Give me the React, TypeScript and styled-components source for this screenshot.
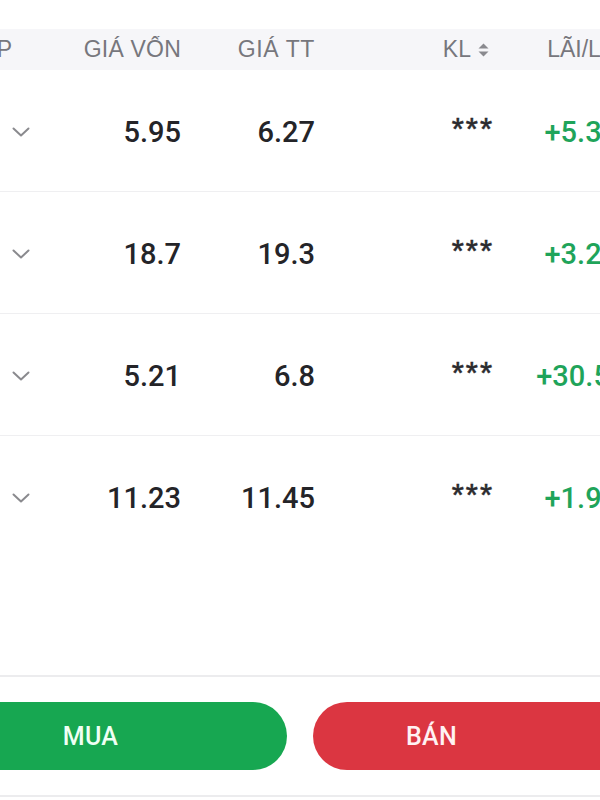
import React from "react";
import styled, { createGlobalStyle } from "styled-components";

const Global = createGlobalStyle`
  html, body { margin: 0; padding: 0; background: #ffffff; }
  body {
    width: 600px;
    height: 800px;
    overflow: hidden;
    font-family: "Liberation Sans", Arial, sans-serif;
  }
`;

const Screen = styled.div`
  width: 600px;
  height: 800px;
  overflow: hidden;
  display: flex;
  flex-direction: column;
  padding: 29px 0 3px;
  box-sizing: border-box;
  background: #ffffff;
`;

const COLS = "140px 141px 134px 176px 202px";

const Table = styled.div`
  margin-left: -100px;
  width: 793px;
  display: flex;
  flex-direction: column;
  flex: none;
`;

const HeaderRow = styled.div`
  display: grid;
  grid-template-columns: ${COLS};
  height: 41px;
  align-items: center;
  background: #f6f6f9;
`;

type Align = "right" | "center";

const HeaderCell = styled.div<{ $align: Align; $pr?: number; $ls?: number }>`
  display: flex;
  align-items: center;
  justify-content: ${(p) => (p.$align === "right" ? "flex-end" : "center")};
  gap: 7px;
  padding-right: ${(p) => p.$pr ?? 0}px;
  font-family: "Liberation Sans", Arial, sans-serif;
  font-size: 23px;
  letter-spacing: ${(p) => p.$ls ?? 0}px;
  color: #77777d;
  white-space: nowrap;
  overflow: hidden;
`;

const Row = styled.div`
  display: grid;
  grid-template-columns: ${COLS};
  height: 122px;
  padding-top: 2px;
  align-items: center;
  box-sizing: border-box;
  &:not(:last-child) {
    border-bottom: 1px solid #efeff1;
  }
`;

const ChevronCell = styled.div`
  display: flex;
  justify-content: flex-end;
  align-items: center;
  padding-right: 10px;
`;

const Cell = styled.div<{ $align: Align; $tone?: "dark" | "up" }>`
  display: flex;
  align-items: center;
  justify-content: ${(p) => (p.$align === "right" ? "flex-end" : "center")};
  font-family: Roboto, "Liberation Sans", Arial, sans-serif;
  font-weight: 500;
  font-size: 29px;
  color: ${(p) => (p.$tone === "up" ? "#1fa45a" : "#242428")};
  white-space: nowrap;
`;

const Masked = styled.span`
  font-family: "Liberation Sans", Arial, sans-serif;
  font-weight: 400;
  font-size: 31px;
  letter-spacing: 2px;
  color: #2a2a2e;
  margin-right: -3px;
  transform: translateY(-2px);
  -webkit-text-stroke: 0.6px #2a2a2e;
`;

const Spacer = styled.div`
  flex: 1;
`;

const Footer = styled.div`
  border-top: 2px solid #ececee;
  border-bottom: 2px solid #ececee;
  padding: 25px 0;
  flex: none;
`;

const ButtonBar = styled.div`
  display: grid;
  grid-template-columns: 1fr 1fr;
  gap: 26px;
  margin: 0 -106px;
`;

const ActionButton = styled.button<{ $kind: "buy" | "sell" }>`
  height: 68px;
  border: none;
  border-radius: 34px;
  display: flex;
  align-items: center;
  justify-content: center;
  padding: 0 ${(p) => (p.$kind === "sell" ? "156px" : "0")} 0 0;
  background: ${(p) => (p.$kind === "buy" ? "#17a751" : "#db3641")};
  color: ${(p) => (p.$kind === "buy" ? "#effff4" : "#fff2f3")};
  font-family: Roboto, "Liberation Sans", Arial, sans-serif;
  font-weight: 500;
  font-size: 25px;
  letter-spacing: 0.3px;
`;

const Chevron = () => (
  <svg width="18" height="10" viewBox="0 0 18 10" fill="none">
    <polyline
      points="1.5,1.5 9,8.5 16.5,1.5"
      stroke="#8a8a8e"
      strokeWidth="2"
      strokeLinecap="round"
      strokeLinejoin="round"
    />
  </svg>
);

const SortIcon = () => (
  <svg width="11" height="14" viewBox="0 0 11 14">
    <polygon points="5.5,0.5 10.5,5.5 0.5,5.5" fill="#8a8a8f" />
    <polygon points="0.5,8.5 10.5,8.5 5.5,13.5" fill="#8a8a8f" />
  </svg>
);

const rows = [
  { cost: "5.95", price: "6.27", pnl: "+5.38%" },
  { cost: "18.7", price: "19.3", pnl: "+3.21%" },
  { cost: "5.21", price: "6.8", pnl: "+30.52%" },
  { cost: "11.23", price: "11.45", pnl: "+1.96%" },
];

export default function App() {
  return (
    <>
      <Global />
      <Screen>
        <Table>
          <HeaderRow>
            <HeaderCell $align="right" $pr={28}>MÃ CP</HeaderCell>
            <HeaderCell $align="right" $ls={0.2}>GIÁ VỐN</HeaderCell>
            <HeaderCell $align="right" $ls={0.6}>GIÁ TT</HeaderCell>
            <HeaderCell $align="right" $pr={2}>
              KL
              <SortIcon />
            </HeaderCell>
            <HeaderCell $align="center">
              LÃI/LỖ
              <SortIcon />
            </HeaderCell>
          </HeaderRow>
          {rows.map((r) => (
            <Row key={r.cost}>
              <ChevronCell>
                <Chevron />
              </ChevronCell>
              <Cell $align="right">{r.cost}</Cell>
              <Cell $align="right">{r.price}</Cell>
              <Cell $align="right">
                <Masked>***</Masked>
              </Cell>
              <Cell $align="center" $tone="up">
                {r.pnl}
              </Cell>
            </Row>
          ))}
        </Table>
        <Spacer />
        <Footer>
          <ButtonBar>
            <ActionButton $kind="buy">MUA</ActionButton>
            <ActionButton $kind="sell">BÁN</ActionButton>
          </ButtonBar>
        </Footer>
      </Screen>
    </>
  );
}
